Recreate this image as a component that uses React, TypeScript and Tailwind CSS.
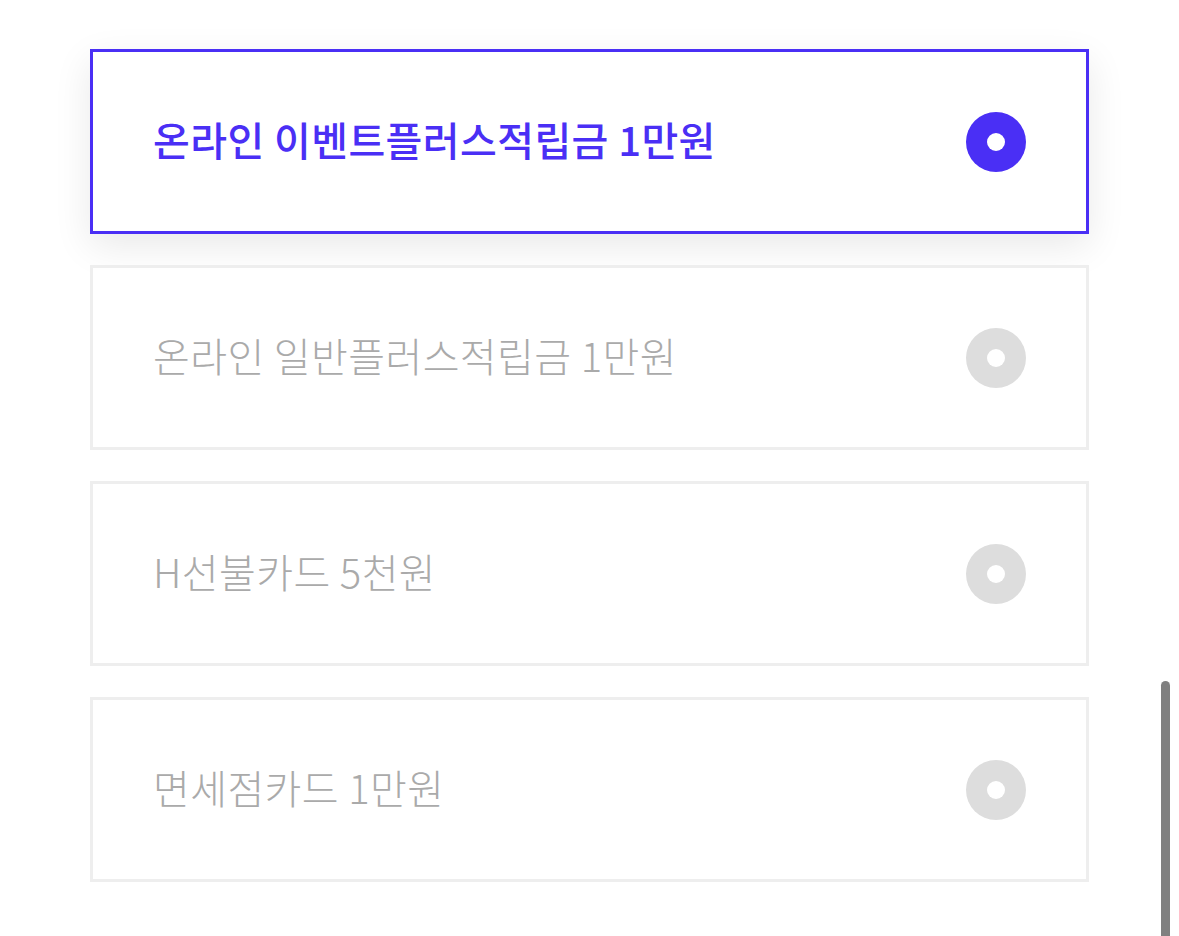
import { useState } from "react";

const options = [
  "온라인 이벤트플러스적립금 1만원",
  "온라인 일반플러스적립금 1만원",
  "H선불카드 5천원",
  "면세점카드 1만원",
];

export default function App() {
  const [selected, setSelected] = useState(0);

  return (
    <div
      className="relative h-[936px] w-[1179px] overflow-hidden bg-white"
      style={{ fontFamily: '"Noto Sans CJK KR", "Noto Sans", sans-serif' }}
    >
      <div className="flex flex-col gap-[31px] pl-[90px] pr-[90px] pt-[49px]">
        {options.map((label, i) => (
          <Option key={label} label={label} active={selected === i} onClick={() => setSelected(i)} />
        ))}
      </div>

      {/* overlay scrollbar */}
      <div className="absolute left-[1161px] top-[681px] h-[300px] w-[9px] rounded-full bg-[#808080]" />
    </div>
  );
}

function Option({ label, active, onClick }: { label: string; active: boolean; onClick: () => void }) {
  return (
    <button
      onClick={onClick}
      className={`flex h-[185px] w-full items-center justify-between border-[3px] bg-white pl-[60px] pr-[60px] text-left ${
        active ? "border-[#4a2ff5] shadow-[0_12px_36px_rgba(0,0,0,0.09)]" : "border-[#eeeeee]"
      }`}
    >
      <span
        className={`mb-[6px] text-[40px] leading-none tracking-[0.01em] ${
          active ? "font-medium text-[#4a2ff5]" : "font-light text-[#aaaaaa]"
        }`}
      >
        {label}
      </span>
      <span
        className={`flex h-[60px] w-[60px] items-center justify-center rounded-full ${
          active ? "bg-[#4a2ff5]" : "bg-[#dddddd]"
        }`}
      >
        <span className="h-[18px] w-[18px] rounded-full bg-white" />
      </span>
    </button>
  );
}
